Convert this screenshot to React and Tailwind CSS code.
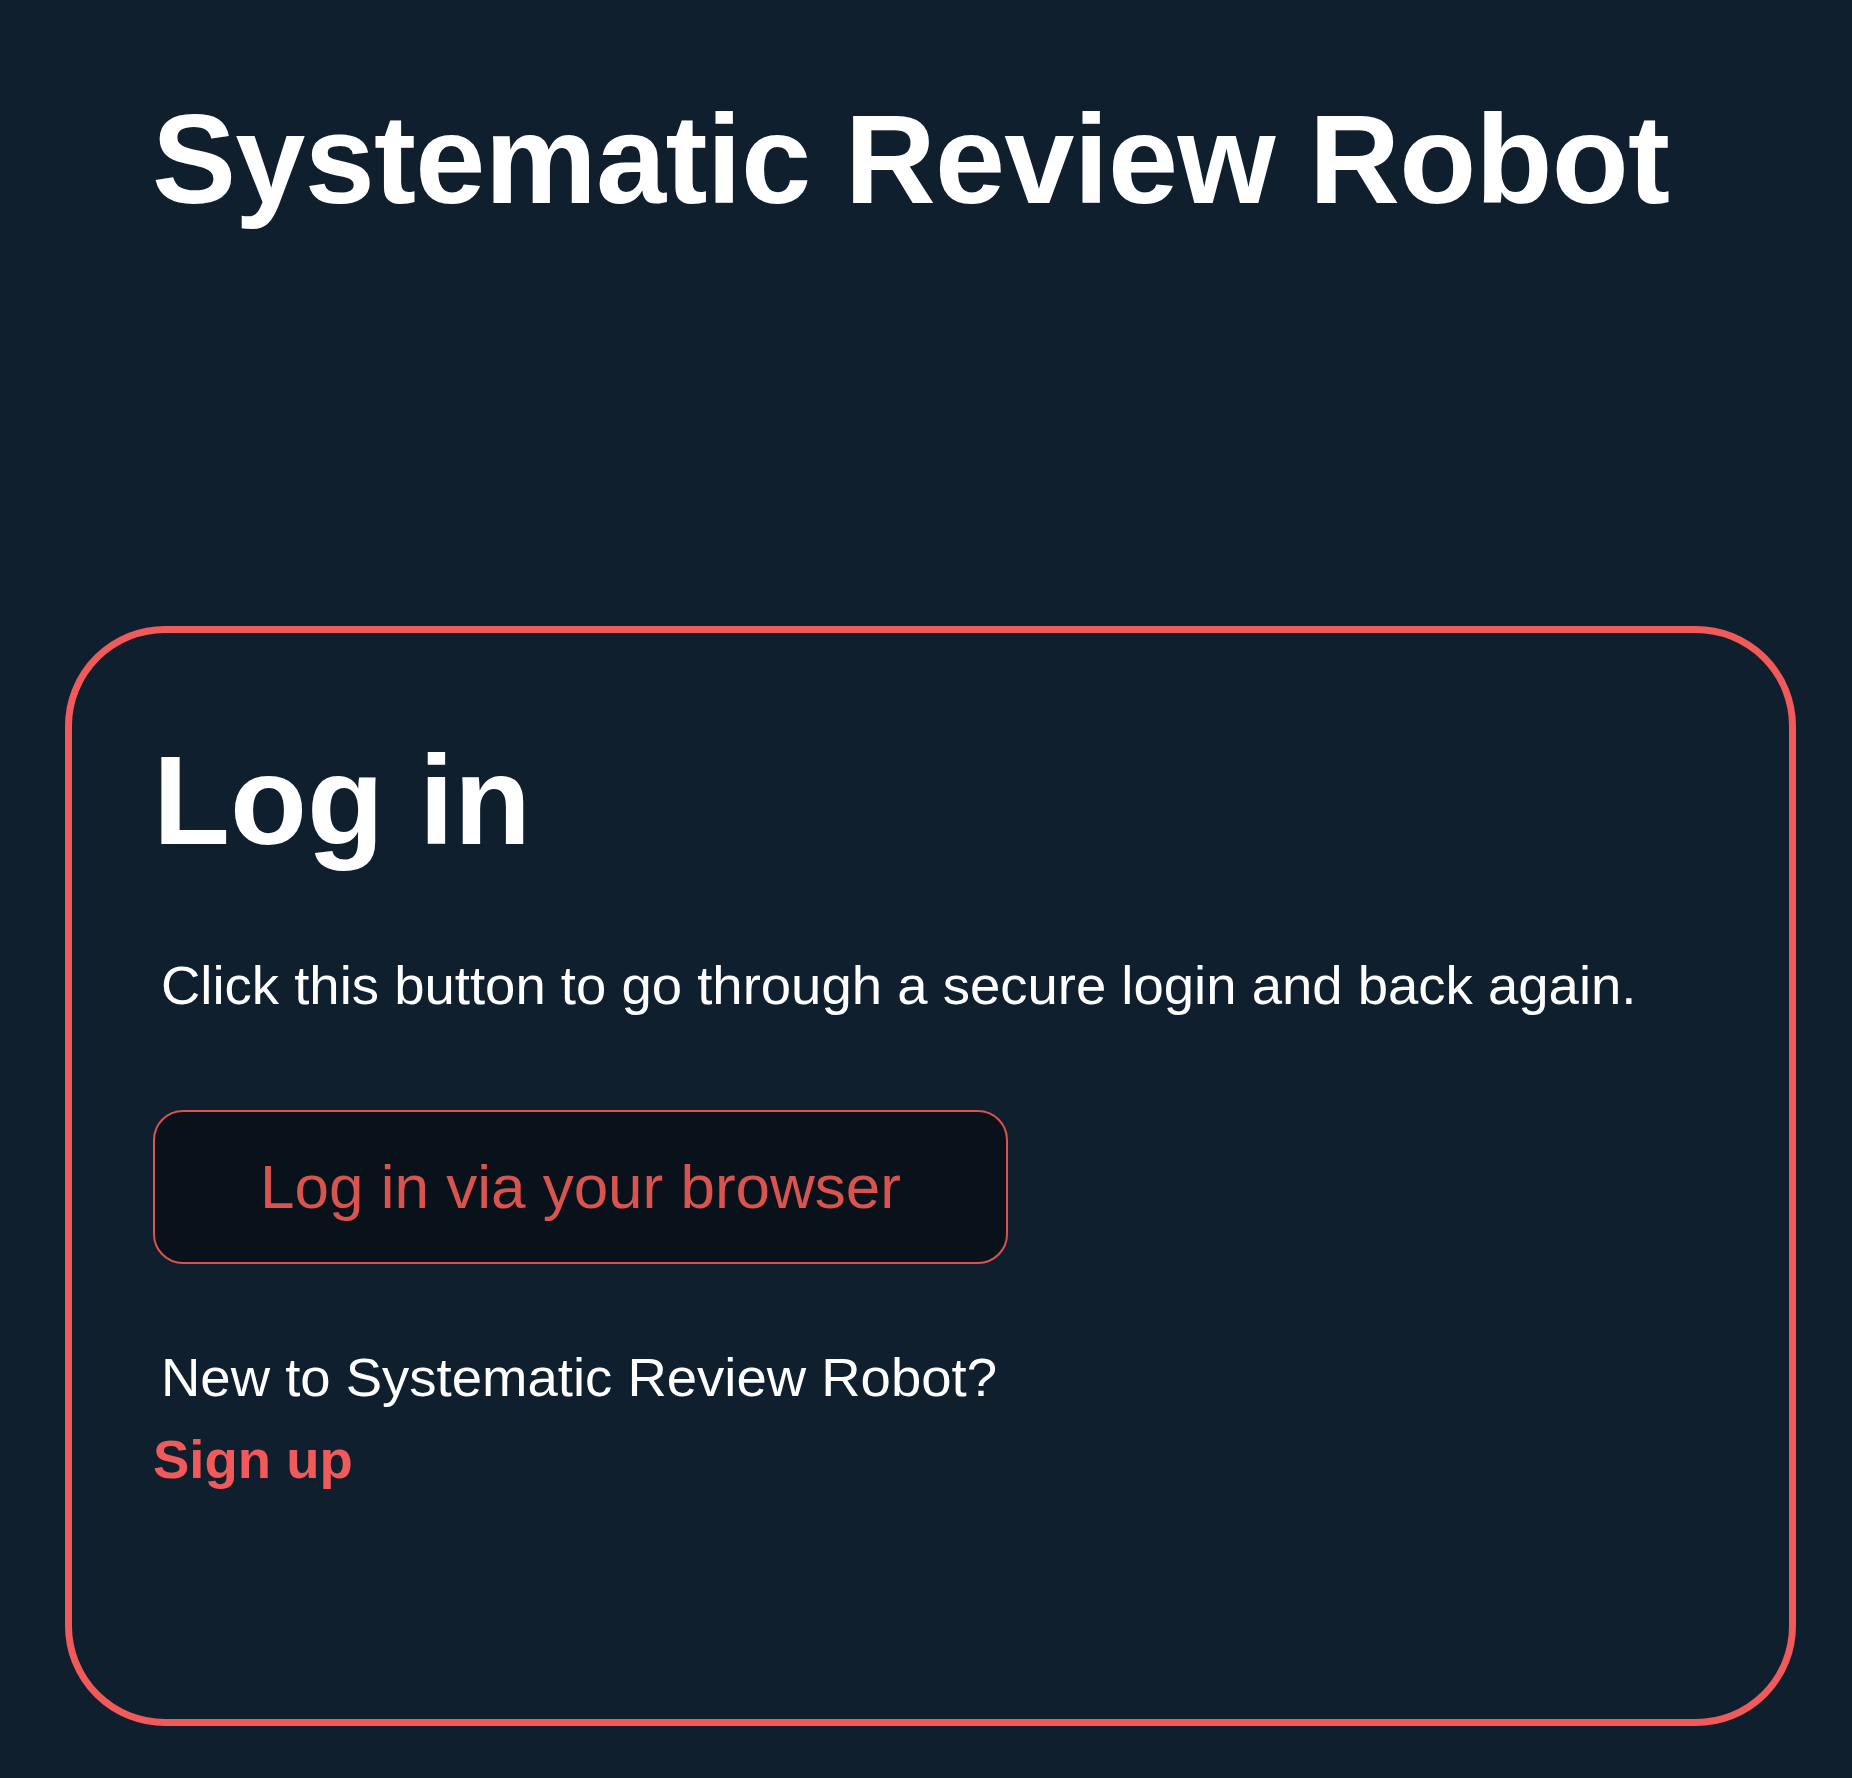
export default function App() {
  return (
    <div className="min-h-screen bg-[#0f1f2e] font-['Liberation_Sans',Arial,sans-serif] text-white">
      <h1 className="pl-[152px] pt-[97px] text-[126px] font-bold leading-[126px] tracking-[-0.7px]">Systematic Review Robot</h1>

      <div className="ml-[65px] mr-[56px] mt-[403px] h-[1100px] rounded-[100px] border-[7px] border-[#f05a5a] pl-[81px] pt-[105px]">
        <h2 className="text-[126px] font-bold leading-[126px]">Log in</h2>

        <p className="ml-[8px] mt-[91px] text-[54.5px] leading-[62px]">
          Click this button to go through a secure login and back again.
        </p>

        <button className="mt-[93px] flex h-[154px] w-[855px] items-center justify-center rounded-[30px] border-2 border-[#d9534f] bg-[#09111a] text-[62px] leading-none text-[#d9534f]">
          Log in via your browser
        </button>

        <div className="mt-[73px] text-[54.5px] leading-[82px]">
          <p className="ml-[8px]">New to Systematic Review Robot?</p>
          <a href="#" className="block font-bold text-[#f05a5a]">Sign up</a>
        </div>
      </div>
    </div>
  );
}
